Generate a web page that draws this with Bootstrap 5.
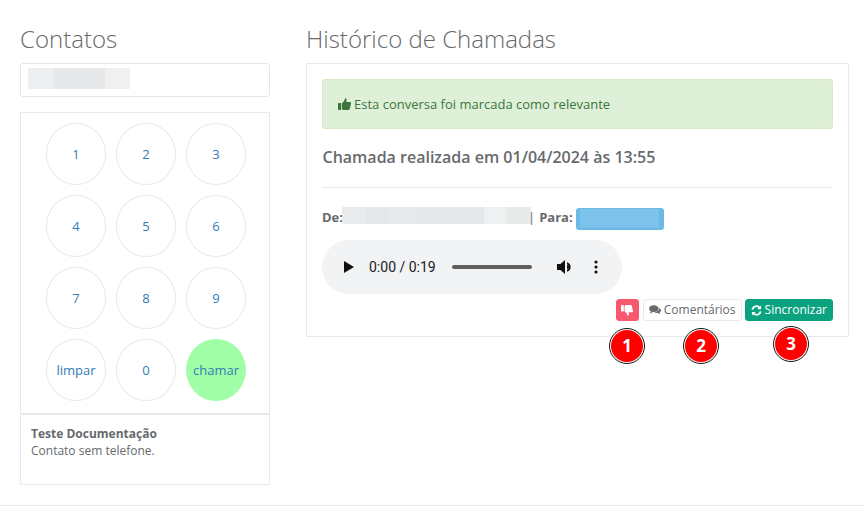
<!DOCTYPE html>
<html lang="pt">
<head>
<meta charset="utf-8">
<title>Histórico de Chamadas</title>
<link href="https://cdn.jsdelivr.net/npm/bootstrap@5.3.0/dist/css/bootstrap.min.css" rel="stylesheet">
<style>
html,body{height:507px;overflow:hidden}
body{font-family:"Open Sans",sans-serif;font-size:13px;line-height:18.57px;color:#676a6c;background:#fff}
.page-wrap{padding:0 16px 0 20px;height:505px;gap:36px;border-bottom:1px solid #e7eaec;box-sizing:content-box}
.side-col{width:250px;flex:none}
.main-col{width:543px;flex:none}
.page-title{font-size:24px;font-weight:300;line-height:30px;margin:24px 0 9px;color:#676a6c}
.search-box{height:34px;border:1px solid #e5e6e7;border-radius:3px;padding:4px 7px;margin-bottom:15px}
.blur-strip{height:21px}
.blur-a{width:26px;background:#eeeff0}
.blur-b{width:51px;background:#e7e8e9}
.blur-c{width:25px;background:#f0f0f1}
.pad-box{height:303px;border:1px solid #e7eaec;border-bottom-width:2px;padding:10px 0 0 25px;row-gap:10px;column-gap:10px;display:grid;grid-template-columns:repeat(3,60px);grid-auto-rows:62px}
.pad-key{display:flex;align-items:center;justify-content:center;border:1px solid #e9e9e9;border-radius:50%;color:#337ab7;text-decoration:none}
.pad-call{background:#a0ffa6;border-color:#a0ffa6}
.info-box{height:70px;border:1px solid #e7eaec;border-top:0;padding:10px;font-size:12px;line-height:17px}
.info-box strong{font-weight:700}
.call-panel{height:274px;border:1px solid #e7eaec;padding:15px 15px 0}
.ok-alert{height:50px;background:#dff0d8;border:1px solid #d6e9c6;border-radius:3px;color:#3c763d;padding:0 15px;gap:3px}
.call-heading{font-size:16px;font-weight:600;line-height:20px;margin:18px 0 20px;color:#676a6c;padding-left:.5px}
.soft-rule{border-top:1px solid #e7eaec;margin:0 0 20px}
.party-row{height:22px;margin-bottom:10px}
.party-row b{font-weight:700}
.party-row b,.party-row span{line-height:18px}
.from-label{margin-right:-1px}
.from-blur{flex:none;width:189px;height:17px;margin:-1px -3px 0 0}
.from-blur i{display:block;height:100%}
.from-blur i:nth-child(1){width:24px;background:#e9eaeb}
.from-blur i:nth-child(2){width:22px;background:#e6e7e8}
.from-blur i:nth-child(3){width:25px;background:#e8e9ea}
.from-blur i:nth-child(4){width:24px;background:#e7e8e9}
.from-blur i:nth-child(5){width:47px;background:#e6e7e8}
.from-blur i:nth-child(6){width:23px;background:#eff0f1}
.from-blur i:nth-child(7){width:24px;background:#e8e9e9}
.to-label{margin-left:4px}
.to-chip{width:88px;height:22px;margin-left:3px;background:#7cc2ea;border:1px solid #6bb9e6;border-radius:3px;border-bottom-width:2px;border-left-width:4px;border-right-width:5px}
.player-bar{width:300px;height:54px;border-radius:27px;background:#f1f3f4;padding:0 16px 0 21px;font-family:"Roboto",sans-serif;font-size:14px;color:#202124;margin-bottom:5px}
.player-time{margin-left:14px;width:67px;white-space:nowrap;letter-spacing:0}
.player-track{width:80px;height:4px;background:#5f5f5f;border-radius:2px;margin-left:16px}
.player-vol{margin-left:25px}
.player-more{margin-left:21px}
.act-row{gap:3px}
.act-btn{display:inline-flex;align-items:center;gap:3px;height:22px;padding:0 5px;font-size:12px;line-height:18px;border-radius:3px;border:1px solid;white-space:nowrap}
.act-red{width:23px;justify-content:center;padding:0;background:#f8596f;border-color:#f8596f;margin-right:1px}
.act-white{background:#fff;border-color:#e7eaec;color:#676a6c}
.act-green{background:#0aa27f;border-color:#0aa27f;color:#fff}
.marker{position:absolute;width:36px;height:36px;border-radius:50%;background:#f00;border:2px solid #fff;outline:1.5px solid #111;outline-offset:-1px;color:#fff;font-weight:700;font-size:17px;display:flex;align-items:center;justify-content:center}
.mk1{left:609px;top:328px}
.mk2{left:683px;top:328px}
.mk3{left:773px;top:326px}
</style>
</head>
<body>
<div class="page-wrap d-flex">
  <div class="side-col">
    <h2 class="page-title">Contatos</h2>
    <div class="search-box d-flex">
      <div class="blur-strip blur-a"></div><div class="blur-strip blur-b"></div><div class="blur-strip blur-c"></div>
    </div>
    <div class="pad-box">
      <a class="pad-key" href="#">1</a><a class="pad-key" href="#">2</a><a class="pad-key" href="#">3</a>
      <a class="pad-key" href="#">4</a><a class="pad-key" href="#">5</a><a class="pad-key" href="#">6</a>
      <a class="pad-key" href="#">7</a><a class="pad-key" href="#">8</a><a class="pad-key" href="#">9</a>
      <a class="pad-key" href="#">limpar</a><a class="pad-key" href="#">0</a><a class="pad-key pad-call" href="#">chamar</a>
    </div>
    <div class="info-box"><strong>Teste Documentação</strong><br>Contato sem telefone.</div>
  </div>
  <div class="main-col">
    <h2 class="page-title">Histórico de Chamadas</h2>
    <div class="call-panel">
      <div class="ok-alert d-flex align-items-center">
        <svg width="13" height="12" viewBox="0 0 13 12" fill="#3c763d"><rect x="0" y="5" width="3" height="7" rx=".5"/><path d="M3.8 5.2 6.2 3 7 .2c1.300 0 1.800 1 1.600 2.200L8.200 4H12c.8 0 1.200.8 1 1.400l-1.200 5.400c-.2.7-.6 1.200-1.400 1.200H6c-.9 0-1.500-.5-2.200-.8z"/></svg>
        <span>Esta conversa foi marcada como relevante</span>
      </div>
      <h3 class="call-heading">Chamada realizada em 01/04/2024 às 13:55</h3>
      <div class="soft-rule"></div>
      <div class="party-row d-flex align-items-start">
        <b class="from-label">De:</b>
        <div class="from-blur d-flex"><i></i><i></i><i></i><i></i><i></i><i></i><i></i></div>
        <span>|</span><b class="to-label">Para:</b>
        <div class="to-chip"></div>
      </div>
      <div class="player-bar d-flex align-items-center">
        <svg width="12" height="14" viewBox="0 0 12 14" fill="#111"><path d="M1 1v12l10-6z"/></svg>
        <span class="player-time">0:00 / 0:19</span>
        <div class="player-track"></div>
        <svg class="player-vol" width="16" height="16" viewBox="0 0 16 16" fill="#111"><path d="M0 5v6h3.500L8 15V1L3.500 5z"/><path d="M10 3.200v2a3.200 3.200 0 0 1 0 5.600v2a5 5 0 0 0 0-9.600z"/><path d="M10 6v4a2 2 0 0 0 0-4z"/></svg>
        <svg class="player-more" width="4" height="14" viewBox="0 0 4 14" fill="#111"><circle cx="2" cy="2" r="1.600"/><circle cx="2" cy="7" r="1.600"/><circle cx="2" cy="12" r="1.600"/></svg>
      </div>
      <div class="act-row d-flex justify-content-end">
        <span class="act-btn act-red"><svg width="12" height="11" viewBox="0 0 13 12" fill="#fff"><g transform="matrix(1 0 0 -1 0 12)"><rect x="0" y="5" width="3" height="7" rx=".5"/><path d="M3.8 5.2 6.2 3 7 .2c1.300 0 1.800 1 1.600 2.200L8.200 4H12c.8 0 1.200.8 1 1.400l-1.200 5.400c-.2.7-.6 1.200-1.400 1.200H6c-.9 0-1.500-.5-2.200-.8z"/></g></svg></span>
        <span class="act-btn act-white"><svg width="12" height="10" viewBox="0 0 13 11" fill="#676a6c"><ellipse cx="5.200" cy="4" rx="5.200" ry="3.800"/><path d="M2 6.500 1 9.500l3.500-2z"/><path d="M11.300 3.200c1.100.7 1.700 1.600 1.700 2.600 0 1-.6 1.800-1.400 2.400l.7 2-2.600-1.400c-1.600.2-3.200-.2-4.200-1.100 3 0 5.600-1.800 5.800-4.500z"/></svg>Comentários</span>
        <span class="act-btn act-green"><svg width="11" height="11" viewBox="0 0 12 12" fill="none" stroke="#fff" stroke-width="2"><path d="M1.500 5A4.600 4.600 0 0 1 9.700 3.200"/><path d="M10.500 7A4.600 4.600 0 0 1 2.300 8.800"/><path d="M11 .5v4H7z" fill="#fff" stroke="none"/><path d="M1 11.500v-4h4z" fill="#fff" stroke="none"/></svg>Sincronizar</span>
      </div>
    </div>
  </div>
</div>
<span class="marker mk1">1</span>
<span class="marker mk2">2</span>
<span class="marker mk3">3</span>
<script src="https://cdn.jsdelivr.net/npm/bootstrap@5.3.0/dist/js/bootstrap.bundle.min.js"></script>
</body>
</html>
